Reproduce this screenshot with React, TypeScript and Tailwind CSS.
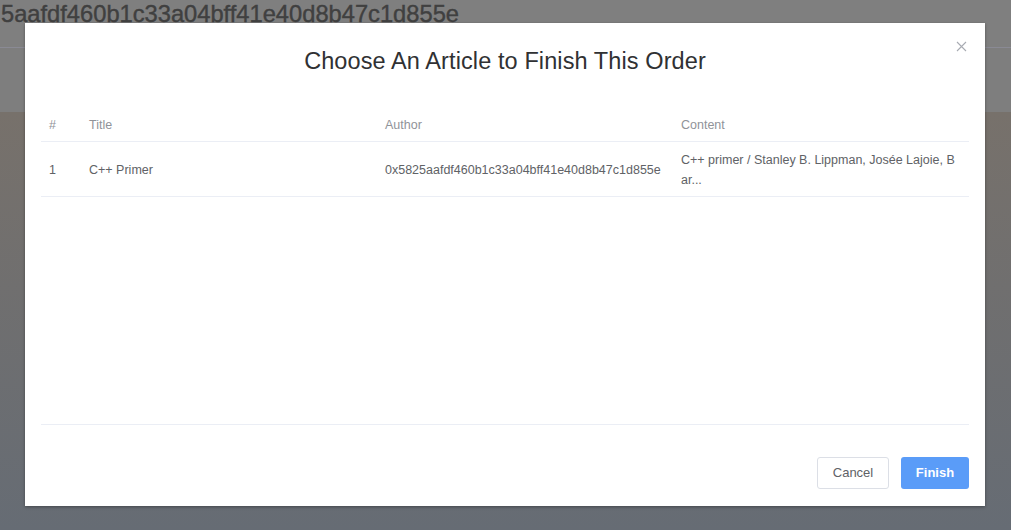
import React from 'react';

const columns = ['#', 'Title', 'Author', 'Content'];

const rows = [
  {
    id: 1,
    title: 'C++ Primer',
    author: '0x5825aafdf460b1c33a04bff41e40d8b47c1d855e',
    content: ['C++ primer / Stanley B. Lippman, Josée Lajoie, B', 'ar...'],
  },
];

const CloseIcon = () => (
  <svg width="11" height="11" viewBox="0 0 11 11" className="block">
    <path d="M1 1 L10 10 M10 1 L1 10" stroke="#a8abb2" strokeWidth="1.1" fill="none" />
  </svg>
);

export default function App() {
  return (
    <div
      className="relative h-[530px] w-full overflow-hidden"
      style={{ fontFamily: '"Liberation Sans", Arial, sans-serif' }}
    >
      {/* Page behind the overlay (already dimmed) */}
      <div className="flex h-full flex-col">
        <div className="h-[48px] shrink-0 border-b border-[#8a8a94] bg-[#7f7f7f]">
          <div className="pl-[1px] pt-[1px] text-[23.7px] font-medium leading-[26px] text-[#404040] [-webkit-text-stroke:0.4px_#404040]">
            5aafdf460b1c33a04bff41e40d8b47c1d855e
          </div>
        </div>
        <div className="h-[64px] shrink-0 bg-[#7e7e7e]" />
        <div className="flex-1 bg-gradient-to-b from-[#77716b] to-[#666c74]" />
      </div>

      {/* Dialog */}
      <div className="absolute left-[25px] top-[23px] flex h-[483px] w-[960px] flex-col bg-white shadow-[0_1px_3px_rgba(0,0,0,0.35)]">
        <div className="relative flex h-[79px] shrink-0 items-center justify-center pb-[2px]">
          <h1 className="text-[23.5px] font-normal leading-none tracking-[0.1px] text-[#303133]">
            Choose An Article to Finish This Order
          </h1>
          <button className="absolute right-[18px] top-[18px] p-[0]">
            <CloseIcon />
          </button>
        </div>

        <div className="mx-[16px] flex h-[323px] shrink-0 flex-col border-b border-[#ebeef5] text-[12.5px]">
          <div className="grid h-[40px] shrink-0 grid-cols-[40px_296px_296px_296px] items-center border-b border-[#ebeef5] text-[#909399]">
            {columns.map((c) => (
              <div key={c} className="px-[8px] pt-[7px]">
                {c}
              </div>
            ))}
          </div>
          {rows.map((r) => (
            <div
              key={r.id}
              className="grid h-[55px] shrink-0 grid-cols-[40px_296px_296px_296px] items-center border-b border-[#ebeef5] pt-[2px] leading-[20px] text-[#606266]"
            >
              <div className="px-[8px]">{r.id}</div>
              <div className="px-[8px]">{r.title}</div>
              <div className="whitespace-nowrap px-[8px]">{r.author}</div>
              <div className="px-[8px]">
                {r.content.map((line) => (
                  <div key={line}>{line}</div>
                ))}
              </div>
            </div>
          ))}
        </div>

        <div className="flex flex-1 items-start justify-end gap-[12px] px-[16px] pt-[32px]">
          <button className="h-[32px] w-[72px] rounded-[3px] border border-[#dcdfe6] bg-white text-[13px] text-[#606266]">
            Cancel
          </button>
          <button className="h-[32px] w-[68px] rounded-[3px] bg-[#5a9cf8] text-[13px] font-bold text-white">
            Finish
          </button>
        </div>
      </div>
    </div>
  );
}
